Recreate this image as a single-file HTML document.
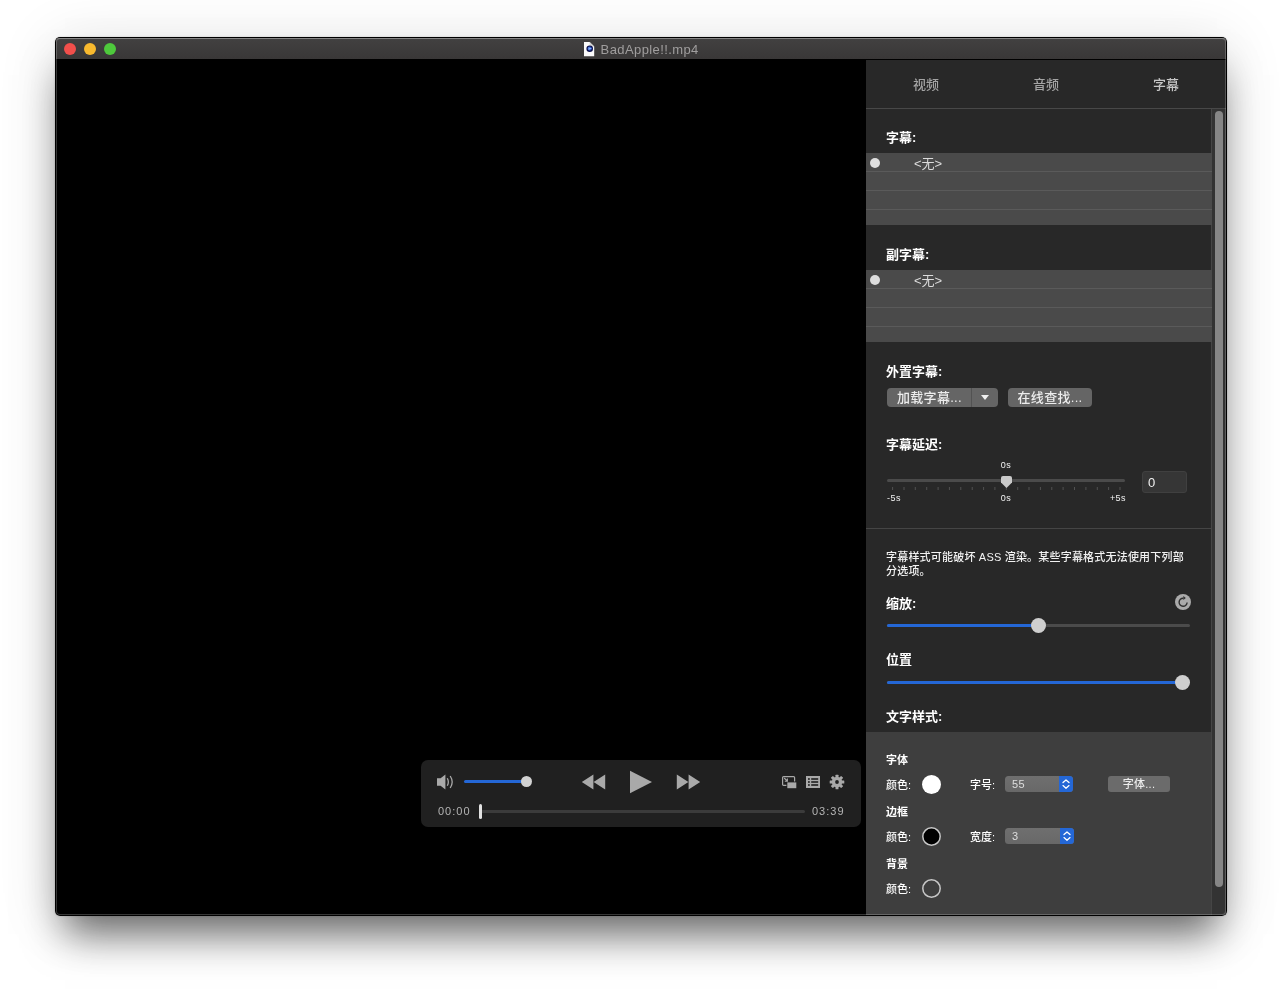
<!DOCTYPE html>
<html lang="zh-CN">
<head>
<meta charset="utf-8">
<title>BadApple!!.mp4</title>
<style>
html,body{margin:0;padding:0;}
body{width:1282px;height:989px;overflow:hidden;background:#fff;position:relative;
  font-family:"Liberation Sans","Noto Sans CJK SC",sans-serif;font-size:13px;color:#fff;}
*{box-sizing:border-box;}
.a{position:absolute;}
.t{position:absolute;white-space:nowrap;line-height:1;}
#shadow{position:absolute;left:55px;top:37px;width:1172px;height:879px;border-radius:5px;
  box-shadow:0 28px 38px -10px rgba(0,0,0,.56),0 6px 60px rgba(0,0,0,.12),0 0 2px rgba(0,0,0,.2);}
#win{position:absolute;left:55px;top:37px;width:1172px;height:879px;border-radius:5px;background:#000;overflow:hidden;}
#pg{position:absolute;left:-55px;top:-37px;width:1282px;height:989px;will-change:transform;}
#ring{position:absolute;left:56px;top:38px;width:1170px;height:877px;border-radius:4px;border:1px solid rgba(255,255,255,.21);border-top-color:rgba(255,255,255,.36);}
#tb{left:56px;top:38px;width:1170px;height:21px;background:linear-gradient(#424141,#393737);}
.tl{position:absolute;width:12px;height:12px;border-radius:50%;top:43px;}
#title{left:600.6px;top:43px;font-size:13px;color:#a09e9e;letter-spacing:.4px;}
#side{left:866px;top:60px;width:360px;height:855px;background:#282828;}
.tab{top:78px;width:120px;text-align:center;font-size:13px;color:#a4a4a4;font-weight:500;}
.hl{position:absolute;height:1px;}
.lbl{font-weight:bold;font-size:13px;color:#fff;}
.tbl{left:866px;width:346px;height:72px;background:#4a4a4a;}
.tbl i{position:absolute;left:0;width:100%;height:1px;background:#5a5a5a;}
.dot{position:absolute;width:10px;height:10px;border-radius:50%;background:#dedede;}
.btn{position:absolute;height:19px;background:#656565;border-radius:4px;font-size:13px;font-weight:500;color:#ececec;letter-spacing:.3px;text-align:center;line-height:19px;white-space:nowrap;}
.sm{font-size:11px;font-weight:500;}
.tiny{font-size:9px;color:#f2f2f2;letter-spacing:.45px;}
.trk{position:absolute;height:3px;border-radius:2px;background:#4b4b4b;}
.blue{background:#2467d6;}
.knob{position:absolute;border-radius:50%;background:#cfcfcf;}
.well{position:absolute;width:19px;height:19px;border-radius:50%;}
.pop{position:absolute;height:16px;width:68px;border-radius:3.5px;background:linear-gradient(#6f6f6f,#686868);overflow:hidden;font-size:11px;color:#dedede;line-height:16px;padding-left:7px;letter-spacing:.3px;}
.pop b{position:absolute;right:0;top:0;width:14px;height:16px;background:#2467d6;}
</style>
</head>
<body>
<div id="shadow"></div>
<div id="win"><div id="pg">

<!-- title bar -->
<div class="a" id="tb"></div>
<div class="tl" style="left:64px;background:#f24f4b;"></div>
<div class="tl" style="left:84px;background:#f8b92e;"></div>
<div class="tl" style="left:104px;background:#4ec93c;"></div>
<svg class="a" style="left:584px;top:42px" width="11" height="15" viewBox="0 0 11 15">
  <path d="M0 0H5.6L10.2 4.4V14.2H0Z" fill="#fbfbfb"/>
  <path d="M5.6 0L10.2 4.4H5.6Z" fill="#d4d4d4"/>
  <circle cx="5.7" cy="6.7" r="3.3" fill="#0c1048"/>
  <circle cx="5.7" cy="6.6" r="2.1" fill="#2d56c4"/>
  <path d="M4.5 5.2L7.9 6.6L4.5 8Z" fill="#8db8ff"/>
</svg>
<div class="t" id="title">BadApple!!.mp4</div>

<!-- sidebar -->
<div class="a" id="side"></div>


<!-- tabs -->
<div class="t tab" style="left:866px;">视频</div>
<div class="t tab" style="left:986px;">音频</div>
<div class="t tab" style="left:1106px;color:#c6c6c6;">字幕</div>
<div class="hl" style="left:866px;top:108px;width:360px;background:#484848;"></div>

<!-- scrollbar -->
<div class="a" style="left:1211px;top:109px;width:15px;height:806px;background:#333;border-left:1px solid #454545;"></div>
<div class="a" style="left:1215px;top:111px;width:8px;height:776px;border-radius:4px;background:#868686;"></div>

<!-- subtitle list -->
<div class="t lbl" style="left:886px;top:131px;">字幕:</div>
<div class="a tbl" style="top:153px;"><i style="top:18px"></i><i style="top:37px"></i><i style="top:56px"></i></div>
<div class="dot" style="left:870px;top:158px;"></div>
<div class="t" style="left:914px;top:157px;color:#dcdcdc;">&lt;无&gt;</div>

<div class="t lbl" style="left:886px;top:248px;">副字幕:</div>
<div class="a tbl" style="top:270px;"><i style="top:18px"></i><i style="top:37px"></i><i style="top:56px"></i></div>
<div class="dot" style="left:870px;top:275px;"></div>
<div class="t" style="left:914px;top:274px;color:#dcdcdc;">&lt;无&gt;</div>

<!-- external subtitles -->
<div class="t lbl" style="left:886px;top:365px;">外置字幕:</div>
<div class="btn" style="left:887px;top:388px;width:111px;text-align:left;padding-left:10px;">加载字幕...
  <span class="a" style="left:84px;top:0;width:1px;height:19px;background:#525252;"></span>
  <svg class="a" style="left:94px;top:7px" width="8" height="5" viewBox="0 0 8 5"><path d="M0 0H8L4 5Z" fill="#f0f0f0"/></svg>
</div>
<div class="btn" style="left:1008px;top:388px;width:84px;">在线查找...</div>

<!-- delay -->
<div class="t lbl" style="left:886px;top:438px;">字幕延迟:</div>
<div class="t tiny" style="left:986px;top:461px;width:40px;text-align:center;">0s</div>
<div class="trk" style="left:887px;top:479px;width:238px;"></div>
<svg class="a" style="left:887px;top:487px" width="240" height="4" viewBox="0 0 240 4"><g fill="#525252"><rect x="5.1" y="0" width="1" height="3"/><rect x="16.5" y="0" width="1" height="3"/><rect x="27.8" y="0" width="1" height="3"/><rect x="39.2" y="0" width="1" height="3"/><rect x="50.6" y="0" width="1" height="3"/><rect x="61.9" y="0" width="1" height="3"/><rect x="73.3" y="0" width="1" height="3"/><rect x="84.7" y="0" width="1" height="3"/><rect x="96.1" y="0" width="1" height="3"/><rect x="107.4" y="0" width="1" height="3"/><rect x="118.8" y="0" width="1" height="3"/><rect x="130.2" y="0" width="1" height="3"/><rect x="141.5" y="0" width="1" height="3"/><rect x="152.9" y="0" width="1" height="3"/><rect x="164.3" y="0" width="1" height="3"/><rect x="175.6" y="0" width="1" height="3"/><rect x="187.0" y="0" width="1" height="3"/><rect x="198.4" y="0" width="1" height="3"/><rect x="209.8" y="0" width="1" height="3"/><rect x="221.1" y="0" width="1" height="3"/><rect x="232.5" y="0" width="1" height="3"/></g></svg>
<svg class="a" style="left:1001px;top:476px" width="11" height="12" viewBox="0 0 11 12"><path d="M2 0H9Q11 0 11 2V6.6L5.5 12L0 6.6V2Q0 0 2 0Z" fill="#cacaca"/></svg>
<div class="t tiny" style="left:887px;top:494px;">-5s</div>
<div class="t tiny" style="left:986px;top:494px;width:40px;text-align:center;">0s</div>
<div class="t tiny" style="left:1086px;top:494px;width:40px;text-align:right;">+5s</div>
<div class="a" style="left:1142px;top:471px;width:45px;height:22px;background:#363636;border:1px solid #404040;border-radius:3px;"></div>
<div class="t" style="left:1148px;top:476px;color:#f0f0f0;">0</div>

<div class="hl" style="left:866px;top:528px;width:345px;background:#454545;"></div>

<!-- style section -->
<div class="t sm" style="left:886px;top:550px;color:#f2f2f2;white-space:normal;width:304px;line-height:14px;letter-spacing:.2px;">字幕样式可能破坏 ASS 渲染。某些字幕格式无法使用下列部分选项。</div>

<div class="t lbl" style="left:886px;top:597px;">缩放:</div>
<svg class="a" style="left:1175px;top:594px" width="16" height="16" viewBox="0 0 16 16">
  <circle cx="8" cy="8" r="8" fill="#aaaaaa"/>
  <path d="M12.1 8.4A4 4 0 1 1 8.3 4.3" fill="none" stroke="#2e2e2e" stroke-width="1.4"/>
  <path d="M8.3 2.1L10.8 4.1L8.3 6Z" fill="#2e2e2e"/>
</svg>
<div class="trk" style="left:887px;top:624px;width:303px;"></div>
<div class="trk blue" style="left:887px;top:624px;width:150px;"></div>
<div class="knob" style="left:1031px;top:618px;width:15px;height:15px;"></div>

<div class="t lbl" style="left:886px;top:653px;">位置</div>
<div class="trk" style="left:887px;top:681px;width:303px;"></div>
<div class="trk blue" style="left:887px;top:681px;width:294px;"></div>
<div class="knob" style="left:1175px;top:675px;width:15px;height:15px;"></div>

<div class="t lbl" style="left:886px;top:710px;">文字样式:</div>

<!-- text style panel -->
<div class="a" style="left:866px;top:732px;width:345px;height:183px;background:#3e3e3e;"></div>
<div class="t sm" style="left:886px;top:755px;font-weight:bold;">字体</div>
<div class="t sm" style="left:886px;top:780px;">颜色:</div>
<div class="well" style="left:922px;top:775px;background:#fff;"></div>
<div class="t sm" style="left:970px;top:780px;">字号:</div>
<div class="pop" style="left:1005px;top:776px;">55<b><svg width="14" height="16" viewBox="0 0 14 16" style="position:absolute;left:0;top:0"><path d="M4 6.6L7 4L10 6.6M4 9.6L7 12.2L10 9.6" fill="none" stroke="#fff" stroke-width="1.3" stroke-linecap="round" stroke-linejoin="round"/></svg></b></div>
<div class="btn sm" style="left:1108px;top:776px;width:62px;height:16px;line-height:16px;border-radius:3px;background:#6b6b6b;">字体...</div>

<div class="t sm" style="left:886px;top:807px;font-weight:bold;">边框</div>
<div class="t sm" style="left:886px;top:832px;">颜色:</div>
<svg class="a" style="left:922px;top:827px" width="19" height="19" viewBox="0 0 19 19"><circle cx="9.5" cy="9.5" r="8.7" fill="#000" stroke="#c8c8c8" stroke-width="1.5"/></svg>
<div class="t sm" style="left:970px;top:832px;">宽度:</div>
<div class="pop" style="left:1005px;top:828px;width:69px;">3<b><svg width="14" height="16" viewBox="0 0 14 16" style="position:absolute;left:0;top:0"><path d="M4 6.6L7 4L10 6.6M4 9.6L7 12.2L10 9.6" fill="none" stroke="#fff" stroke-width="1.3" stroke-linecap="round" stroke-linejoin="round"/></svg></b></div>

<div class="t sm" style="left:886px;top:859px;font-weight:bold;">背景</div>
<div class="t sm" style="left:886px;top:884px;">颜色:</div>
<svg class="a" style="left:922px;top:879px" width="19" height="19" viewBox="0 0 19 19"><circle cx="9.5" cy="9.5" r="8.7" fill="none" stroke="#c8c8c8" stroke-width="1.5"/></svg>



<!-- on-screen controller -->
<div class="a" style="left:421px;top:760px;width:440px;height:67px;border-radius:7px;background:#202020;"></div>
<!-- volume -->
<svg class="a" style="left:436px;top:774px" width="19" height="16" viewBox="0 0 19 16">
  <path d="M1 4.3H4.6L9.4 0.4V15.6L4.6 11.7H1Z" fill="#a9a9a9"/>
  <path d="M11.3 4.2Q13.4 8 11.3 11.8" fill="none" stroke="#a9a9a9" stroke-width="1.3"/>
  <path d="M14.2 2Q18.2 8 14.2 14" fill="none" stroke="#a9a9a9" stroke-width="1.3"/>
</svg>
<div class="trk blue" style="left:464px;top:780px;width:62px;height:3px;"></div>
<div class="knob" style="left:521px;top:776px;width:11px;height:11px;background:#d2d2d2;"></div>
<!-- transport -->
<svg class="a" style="left:581px;top:774px" width="25" height="16" viewBox="0 0 25 16"><path d="M0.8 8L12.4 0.6V15.4ZM12.6 8L24.2 0.6V15.4Z" fill="#a9a9a9"/></svg>
<svg class="a" style="left:629px;top:770px" width="24" height="24" viewBox="0 0 24 24"><path d="M1 0.8L23 12L1 23.2Z" fill="#a9a9a9"/></svg>
<svg class="a" style="left:676px;top:774px" width="25" height="16" viewBox="0 0 25 16"><path d="M0.8 0.6L12.4 8L0.8 15.4ZM12.6 0.6L24.2 8L12.6 15.4Z" fill="#a9a9a9"/></svg>
<!-- right icons -->
<svg class="a" style="left:781px;top:775px" width="16" height="14" viewBox="0 0 16 14">
  <rect x="1.6" y="1.6" width="12" height="8.8" rx="1" fill="none" stroke="#a9a9a9" stroke-width="1.2"/>
  <rect x="5.4" y="6.5" width="10.6" height="7.5" fill="#202020"/><rect x="6.3" y="7.4" width="9" height="5.8" fill="#a9a9a9"/>
  <path d="M3.2 3L6.2 6M6.4 3.6V6.2H3.8" fill="none" stroke="#a9a9a9" stroke-width="1.1"/>
</svg>
<svg class="a" style="left:806px;top:776px" width="14" height="12" viewBox="0 0 14 12">
  <rect x="0" y="0" width="14" height="12" fill="#a9a9a9"/>
  <g fill="#202020"><rect x="2" y="2.2" width="1.8" height="1.6"/><rect x="5.2" y="2.2" width="7" height="1.6"/>
  <rect x="2" y="5.2" width="1.8" height="1.6"/><rect x="5.2" y="5.2" width="7" height="1.6"/>
  <rect x="2" y="8.2" width="1.8" height="1.6"/><rect x="5.2" y="8.2" width="7" height="1.6"/></g>
</svg>
<svg class="a" style="left:829px;top:774px" width="16" height="16" viewBox="-8 -8 16 16">
  <g fill="#a9a9a9">
    <circle r="5.2"/>
    <g id="tooth"><rect x="-1.5" y="-7.3" width="3" height="3.2" rx=".5"/></g>
    <rect x="-1.5" y="-7.3" width="3" height="3.2" rx=".5" transform="rotate(45)"/>
    <rect x="-1.5" y="-7.3" width="3" height="3.2" rx=".5" transform="rotate(90)"/>
    <rect x="-1.5" y="-7.3" width="3" height="3.2" rx=".5" transform="rotate(135)"/>
    <rect x="-1.5" y="-7.3" width="3" height="3.2" rx=".5" transform="rotate(180)"/>
    <rect x="-1.5" y="-7.3" width="3" height="3.2" rx=".5" transform="rotate(225)"/>
    <rect x="-1.5" y="-7.3" width="3" height="3.2" rx=".5" transform="rotate(270)"/>
    <rect x="-1.5" y="-7.3" width="3" height="3.2" rx=".5" transform="rotate(315)"/>
  </g>
  <circle r="1.9" fill="#202020"/>
</svg>
<!-- seek -->
<div class="t sm" style="left:438px;top:806px;color:#b4b4b4;letter-spacing:1px;">00:00</div>
<div class="trk" style="left:480px;top:810px;width:325px;background:#3b3b3b;"></div>
<div class="a" style="left:479px;top:804px;width:3px;height:15px;border-radius:1.5px;background:#e2e2e2;"></div>
<div class="t sm" style="left:812px;top:806px;color:#b4b4b4;letter-spacing:1px;">03:39</div>


<div id="ring"></div>
</div></div>
</body>
</html>
